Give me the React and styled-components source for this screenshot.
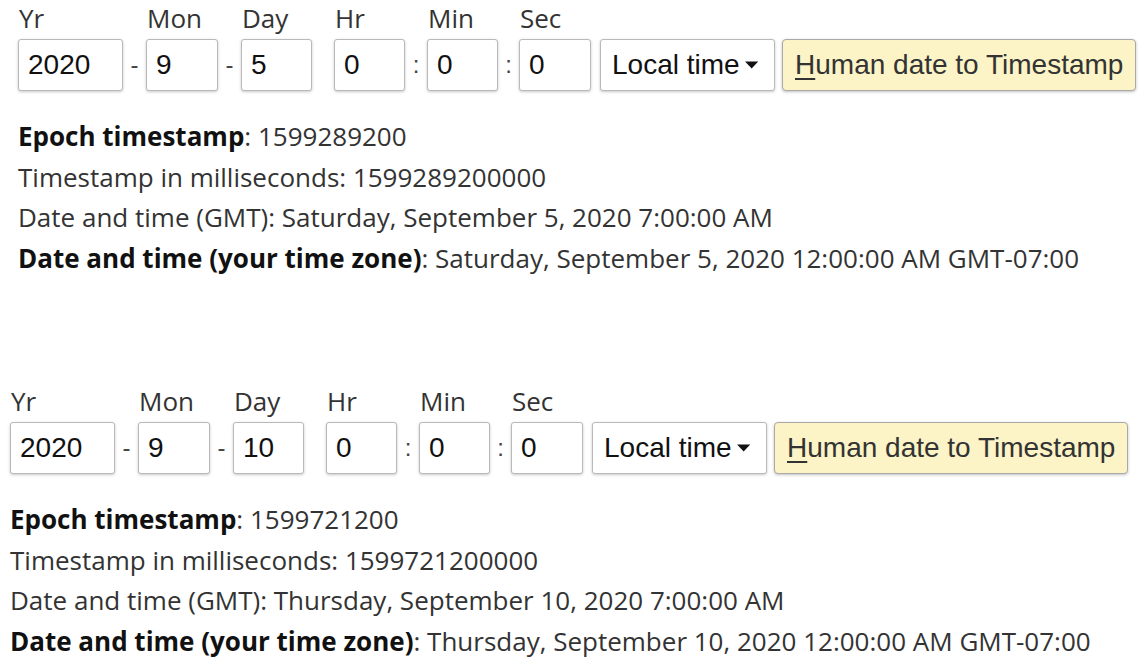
import React from "react";
import styled, { createGlobalStyle } from "styled-components";

const Global = createGlobalStyle`
  html, body { margin: 0; padding: 0; background: #fff; }
  body { font-family: "Open Sans", "Liberation Sans", sans-serif; color: #333; }
`;

const Page = styled.div`
  padding-top: 1px;
  display: flex;
  flex-direction: column;
`;

const Block = styled.section`
  padding-left: ${(p) => p.$indent}px;
  margin-bottom: ${(p) => p.$after}px;
`;

const FormRow = styled.div`
  display: flex;
  align-items: flex-end;
`;

const Field = styled.div`
  display: flex;
  flex-direction: column;
`;

const Label = styled.label`
  font-family: "Open Sans", sans-serif;
  font-size: 26px;
  line-height: 34px;
  color: #333;
  margin-bottom: 4px;
  padding-left: 1px;
  white-space: nowrap;
`;

const Input = styled.input`
  box-sizing: border-box;
  width: ${(p) => p.$w}px;
  height: 52px;
  margin: 0;
  padding: 0 0 0 9px;
  font-family: "Liberation Sans", Arial, sans-serif;
  font-size: 28px;
  color: #111;
  background: #fff;
  border: 1px solid #b9b9b9;
  border-radius: 3px;
  box-shadow: 0 1px 3px rgba(0, 0, 0, 0.22);
  outline: none;
`;

const Sep = styled.span`
  width: ${(p) => p.$w}px;
  height: 52px;
  display: flex;
  align-items: center;
  justify-content: center;
  font-family: "Liberation Sans", Arial, sans-serif;
  font-size: 24px;
  color: #444;
`;

const SelectBox = styled.button`
  box-sizing: border-box;
  width: 175px;
  height: 52px;
  margin-left: 9px;
  padding: 0 16px 0 11px;
  display: flex;
  align-items: center;
  gap: 5px;
  font-family: "Liberation Sans", Arial, sans-serif;
  font-size: 28px;
  color: #111;
  background: #fff;
  border: 1px solid #b9b9b9;
  border-radius: 3px;
  box-shadow: 0 1px 3px rgba(0, 0, 0, 0.22);
  white-space: nowrap;
`;

const ConvertButton = styled.button`
  box-sizing: border-box;
  width: 354px;
  height: 52px;
  margin-left: 7px;
  padding: 0 10px 0 12px;
  text-align: left;
  font-family: "Liberation Sans", Arial, sans-serif;
  font-size: 28px;
  color: #333;
  background: #fcf4c6;
  border: 1px solid #a9a9a9;
  border-radius: 4px;
  box-shadow: 0 1px 3px rgba(0, 0, 0, 0.25);
  white-space: nowrap;
  u {
    text-decoration-thickness: 2px;
    text-underline-offset: 4px;
  }
`;

const Results = styled.div`
  margin-top: 25px;
  font-family: "Open Sans", sans-serif;
  font-size: 26px;
  line-height: 40.5px;
  color: #333;
`;

const Line = styled.div`
  white-space: nowrap;
  b {
    font-weight: 700;
    color: #111;
  }
`;

function Caret() {
  return (
    <svg width="15" height="8" viewBox="0 0 15 8">
      <path d="M0 0 L15 0 L7.5 8 Z" fill="#111" />
    </svg>
  );
}

function Converter({ indent, after, date, epoch, gmt, local }) {
  const [y, mo, d] = date;
  return (
    <Block $indent={indent} $after={after}>
      <FormRow>
        <Field>
          <Label>Yr</Label>
          <Input $w={105} defaultValue={y} />
        </Field>
        <Sep $w={23}>-</Sep>
        <Field>
          <Label>Mon</Label>
          <Input $w={72} defaultValue={mo} />
        </Field>
        <Sep $w={23}>-</Sep>
        <Field>
          <Label>Day</Label>
          <Input $w={71} defaultValue={d} />
        </Field>
        <Sep $w={22} />
        <Field>
          <Label>Hr</Label>
          <Input $w={71} defaultValue="0" />
        </Field>
        <Sep $w={22}>:</Sep>
        <Field>
          <Label>Min</Label>
          <Input $w={71} defaultValue="0" />
        </Field>
        <Sep $w={21}>:</Sep>
        <Field>
          <Label>Sec</Label>
          <Input $w={72} defaultValue="0" />
        </Field>
        <SelectBox type="button">
          Local time
          <Caret />
        </SelectBox>
        <ConvertButton type="button">
          <u>H</u>uman date to Timestamp
        </ConvertButton>
      </FormRow>
      <Results>
        <Line>
          <b>Epoch timestamp</b>: {epoch}
        </Line>
        <Line>Timestamp in milliseconds: {epoch}000</Line>
        <Line>Date and time (GMT): {gmt}</Line>
        <Line>
          <b>Date and time (your time zone)</b>: {local}
        </Line>
      </Results>
    </Block>
  );
}

export default function App() {
  return (
    <Page>
      <Global />
      <Converter
        indent={18}
        after={106}
        date={["2020", "9", "5"]}
        epoch="1599289200"
        gmt="Saturday, September 5, 2020 7:00:00 AM"
        local="Saturday, September 5, 2020 12:00:00 AM GMT-07:00"
      />
      <Converter
        indent={10}
        after={0}
        date={["2020", "9", "10"]}
        epoch="1599721200"
        gmt="Thursday, September 10, 2020 7:00:00 AM"
        local="Thursday, September 10, 2020 12:00:00 AM GMT-07:00"
      />
    </Page>
  );
}
